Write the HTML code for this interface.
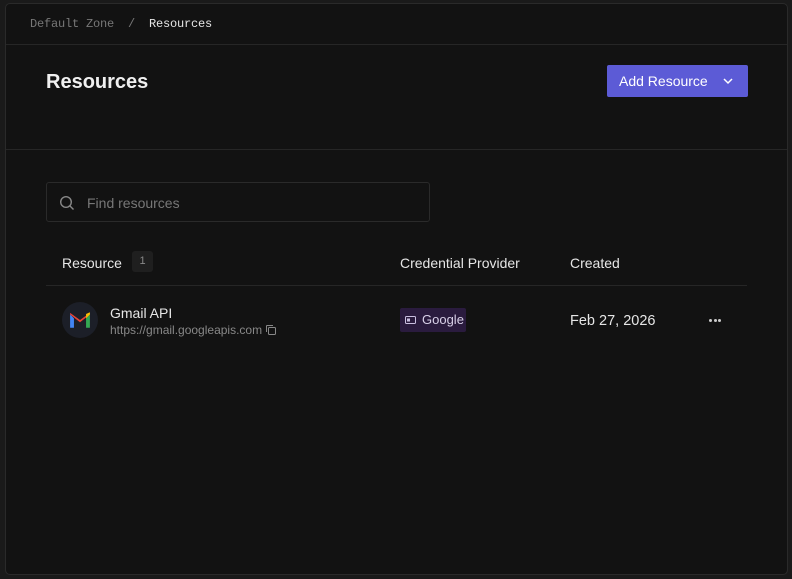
<!DOCTYPE html>
<html><head><meta charset="utf-8"><style>
*{box-sizing:border-box;margin:0;padding:0}
body{width:792px;height:579px;background:#1a1a1a;font-family:"Liberation Sans",sans-serif;position:relative;overflow:hidden}
.frame{position:absolute;left:5px;top:3px;width:783px;height:572px;background:#121212;border:1px solid #2a2a2a;border-radius:5px}
.abs{position:absolute}
.bc{left:24px;top:13px;font-family:"Liberation Mono",monospace;font-size:12px;color:#777;letter-spacing:-0.2px;white-space:pre}
.bc b{font-weight:normal;color:#e6e6e6}
.hr{left:0;width:781px;height:1px;background:#262626}
h1{position:absolute;left:40px;top:67px;font-size:20px;font-weight:bold;color:#f0f0f0}
.btn{left:601px;top:61px;width:141px;height:32px;background:#5c5bd6;border-radius:2px;color:#fff;font-size:14px;padding:8px 0 0 12px}
.search{left:40px;top:178px;width:384px;height:40px;border:1px solid #2a2a2a;border-radius:3px;color:#777;font-size:14px;padding:12px 0 0 40px}
.th{top:251px;font-size:14px;color:#e6e6e6}
.cnt{left:126px;top:247px;width:21px;height:21px;background:#1f1f1f;border-radius:3px;color:#888;font-size:11px;text-align:center;line-height:21px}
.td{font-size:14px;color:#e6e6e6}
.icon{left:56px;top:298px;width:36px;height:36px;border-radius:50%;background:#1c1f28}
.tag{left:394px;top:304px;width:66px;height:24px;background:#2a1b3e;border-radius:2px;color:#d8d0e8;font-size:13px;padding:4px 0 0 22px}
.dot{position:absolute;width:3px;height:3px;border-radius:50%;background:#ccc;top:0}
</style></head><body>
<div class="frame">
<div class="abs bc">Default Zone  /  <b>Resources</b></div>
<div class="abs hr" style="top:40px"></div>
<h1>Resources</h1>
<div class="abs btn">Add Resource <svg style="position:absolute;left:116px;top:12px" width="10" height="8" viewBox="0 0 10 8"><path d="M1 2l4 4 4-4" stroke="#fff" stroke-width="1.5" fill="none"/></svg></div>
<div class="abs hr" style="top:145px"></div>
<div class="abs search"><svg style="position:absolute;left:12px;top:12px" width="16" height="16" viewBox="0 0 16 16"><circle cx="7" cy="7" r="5.3" stroke="#888" stroke-width="1.4" fill="none"/><path d="M11 11l3.5 3.5" stroke="#888" stroke-width="1.4"/></svg>Find resources</div>
<div class="abs th" style="left:56px">Resource</div>
<div class="abs cnt">1</div>
<div class="abs th" style="left:394px">Credential Provider</div>
<div class="abs th" style="left:564px">Created</div>
<div class="abs hr" style="top:281px;left:40px;width:701px"></div>
<div class="abs icon"><svg style="position:absolute;left:7px;top:9px" width="22" height="18" viewBox="0 0 20 16"><path d="M1 3v12h3.5V6.5z" fill="#4285f4"/><path d="M19 3v12h-3.5V6.5z" fill="#34a853"/><path d="M1 3l9 7 9-7V1.5l-9 6.5-9-6.5z" fill="#ea4335"/><path d="M15.5 2.5L19 1v2l-3.5 3.5z" fill="#fbbc04"/></svg></div>
<div class="abs td" style="left:104px;top:301px">Gmail API</div>
<div class="abs" style="left:104px;top:319px;font-size:12px;color:#888">https://gmail.googleapis.com <svg style="vertical-align:-2px" width="12" height="12" viewBox="0 0 12 12"><rect x="3.5" y="3.5" width="7" height="7" rx="1" stroke="#888" fill="none"/><path d="M1.5 8V2a.5.5 0 0 1 .5-.5h6" stroke="#888" fill="none"/></svg></div>
<div class="abs tag"><svg style="position:absolute;left:5px;top:8px" width="11" height="8" viewBox="0 0 11 8"><rect x=".5" y=".5" width="10" height="7" rx="1" stroke="#c9bfe0" fill="none"/><rect x="2" y="2.5" width="3" height="3" fill="#c9bfe0"/></svg>Google</div>
<div class="abs td" style="left:564px;top:309px;font-size:14.5px">Feb 27, 2026</div>
<div class="abs" style="left:703px;top:315px;width:14px;height:3px"><span class="dot" style="left:0"></span><span class="dot" style="left:4.5px"></span><span class="dot" style="left:9px"></span></div>
</div>
</body></html>
